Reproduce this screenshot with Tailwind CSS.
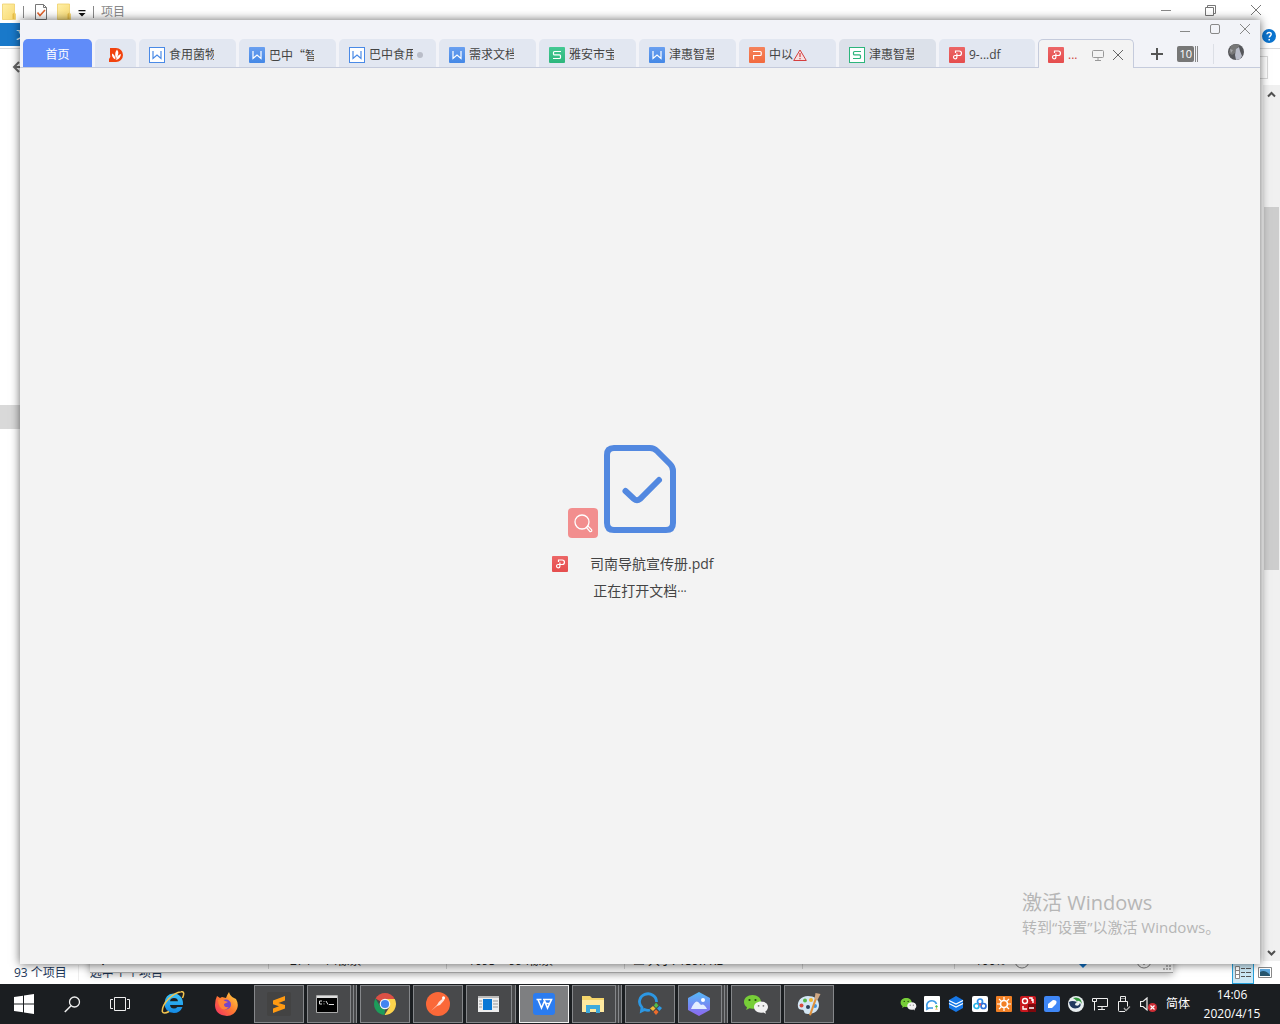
<!DOCTYPE html>
<html lang="zh-CN">
<head>
<meta charset="utf-8">
<title>司南导航宣传册.pdf - WPS</title>
<script src="https://cdn.jsdelivr.net/npm/@tailwindcss/browser@4"></script>
</head>
<body class="flex h-screen flex-col overflow-hidden bg-white font-['Open_Sans','Noto_Sans_CJK_SC',sans-serif] text-xs leading-4 text-[#444]">

<svg class="absolute size-0" aria-hidden="true">
  <defs>
    <linearGradient id="gBlue" x1="0" y1="0" x2="0" y2="1"><stop offset="0" stop-color="#6aa0f0"/><stop offset="1" stop-color="#4488e6"/></linearGradient>
    <linearGradient id="gGreen" x1="0" y1="0" x2="0" y2="1"><stop offset="0" stop-color="#45c993"/><stop offset="1" stop-color="#2cb67c"/></linearGradient>
    <linearGradient id="gOrange" x1="0" y1="0" x2="0" y2="1"><stop offset="0" stop-color="#f5835c"/><stop offset="1" stop-color="#f26a3e"/></linearGradient>
    <linearGradient id="gRed" x1="0" y1="0" x2="0" y2="1"><stop offset="0" stop-color="#ec6666"/><stop offset="1" stop-color="#e54d4d"/></linearGradient>
    <linearGradient id="gFold" x1="0" y1="0" x2="1" y2="1"><stop offset="0" stop-color="#fff0a8"/><stop offset="1" stop-color="#f8d870"/></linearGradient>
    <linearGradient id="gIe" x1="0" y1="0" x2="0" y2="1"><stop offset="0" stop-color="#3cc4f8"/><stop offset="1" stop-color="#1489e4"/></linearGradient>
  </defs>
  <symbol id="w-fill" viewBox="0 0 16 16"><rect width="16" height="16" rx="1" fill="url(#gBlue)"/><path d="M4 4v7.500L8 8l4 3.500V4" fill="none" stroke="#fff" stroke-width="1.200"/></symbol>
  <symbol id="w-line" viewBox="0 0 16 16"><rect x=".5" y=".5" width="15" height="15" fill="#fff" stroke="#4a8ae6"/><path d="M4 4v7.500L8 8l4 3.500V4" fill="none" stroke="#4a8ae6" stroke-width="1.200"/></symbol>
  <symbol id="s-fill" viewBox="0 0 16 16"><rect width="16" height="16" rx="1" fill="url(#gGreen)"/><path d="M12 4.500H5.500a1 1 0 0 0-1 1v1.400a1 1 0 0 0 1 1h5a1 1 0 0 1 1 1v1.600a1 1 0 0 1-1 1H4" fill="none" stroke="#fff" stroke-width="1.200"/></symbol>
  <symbol id="s-line" viewBox="0 0 16 16"><rect x=".5" y=".5" width="15" height="15" fill="#fff" stroke="#2db57c"/><path d="M12 4.500H5.500a1 1 0 0 0-1 1v1.400a1 1 0 0 0 1 1h5a1 1 0 0 1 1 1v1.600a1 1 0 0 1-1 1H4" fill="none" stroke="#2db57c" stroke-width="1.200"/></symbol>
  <symbol id="p-fill" viewBox="0 0 16 16"><rect width="16" height="16" rx="1" fill="url(#gOrange)"/><path d="M4 4.500h7.200q1 0 1 1v2q0 1-1 1H4.600V12.500" fill="none" stroke="#fff" stroke-width="1.200"/></symbol>
  <symbol id="pdf" viewBox="0 0 16 16"><rect width="16" height="16" rx="1" fill="url(#gRed)"/><path d="M6.500 6V4h3.700a2.200 2.200 0 0 1 0 4.500H6a1.700 1.700 0 1 0 1.900 1.700V6.500" fill="none" stroke="#fff" stroke-width="1.200"/></symbol>
  <symbol id="folder" viewBox="0 0 14 17"><path d="M.5 1h12v9l1 1v5.500H.5z" fill="url(#gFold)" stroke="#efcf6a" stroke-width=".8"/><path d="M10.500 16V11l2-1.500V16z" fill="#e7bd47"/></symbol>
  <symbol id="wechat" viewBox="0 0 26 20"><path d="M9.500 1C4.500 1 1 4 1 8c0 2.200 1.100 4 3 5.300L3.200 16l3.300-1.700c1 .3 2 .4 3 .4 5 0 8.500-3 8.500-6.800S14.500 1 9.500 1z" fill="#77ce38"/><circle cx="6.500" cy="6" r="1.100" fill="#244b12"/><circle cx="12.500" cy="6" r="1.100" fill="#244b12"/><path d="M18 7.500c-4 0-7 2.400-7 5.600s3 5.700 7 5.700c.8 0 1.600-.1 2.300-.3l2.700 1.300-.7-2.200c1.600-1 2.700-2.600 2.700-4.500 0-3.200-3-5.600-7-5.600z" fill="#f2f2f2"/><circle cx="15.600" cy="11.800" r=".9" fill="#777"/><circle cx="20.400" cy="11.800" r=".9" fill="#777"/></symbol>
  <symbol id="close" viewBox="0 0 12 12"><path d="M1 1l10 10M11 1L1 11" fill="none" stroke="currentColor"/></symbol>
</svg>

<main class="relative min-h-0 flex-1 overflow-hidden bg-white">

  <!-- File explorer window -->
  <section class="absolute inset-0 flex flex-col bg-white" aria-label="项目">
    <header class="flex h-[23px] shrink-0 items-center justify-between pl-[2px]">
      <div class="flex items-center">
        <svg class="h-[17px] w-[14px]"><use href="#folder"/></svg>
        <i class="ml-[7px] h-3 w-px bg-[#888]"></i>
        <svg class="ml-[11px] h-4 w-3" viewBox="0 0 12 16"><path d="M.5.5h8l3 3v12H.5z" fill="#fff" stroke="#777"/><path d="M8.500.5v3h3" fill="none" stroke="#777"/><path d="M2.500 8.500l2.500 3 5-5.500" fill="none" stroke="#e0622c" stroke-width="1.600"/></svg>
        <svg class="ml-[10px] h-[17px] w-[14px]"><use href="#folder"/></svg>
        <svg class="ml-[7px] mt-1 h-[7px] w-2" viewBox="0 0 8 7"><path d="M.5 0h7v1.200h-7zM.5 3h7L4 6.500z" fill="#111"/></svg>
        <i class="ml-[7px] h-3 w-px bg-[#888]"></i>
        <h1 class="ml-[7px] text-xs text-[#888]">项目</h1>
      </div>
      <div class="flex self-start pr-[2px] text-[#777]">
        <button class="flex h-5 w-[45px] items-center justify-center" aria-label="最小化"><i class="h-px w-[10px] bg-[#888]"></i></button>
        <button class="flex h-5 w-[45px] items-center justify-center" aria-label="还原"><svg class="size-[11px]" viewBox="0 0 11 11"><path d="M.5 2.500h8v8h-8zM2.500 2.500v-2h8v8h-2" fill="none" stroke="#777"/></svg></button>
        <button class="flex h-5 w-[45px] items-center justify-center" aria-label="关闭"><svg class="size-3"><use href="#close"/></svg></button>
      </div>
    </header>
    <div class="flex h-[26px] shrink-0 items-start justify-between border-b border-[#d9dadc]">
      <button class="h-[23px] w-14 bg-[#1979ca] pl-4 text-left text-white">文件</button>
      <svg class="mr-1 mt-[6px] size-[14px]" viewBox="0 0 14 14" role="img" aria-label="帮助"><circle cx="7" cy="7" r="7" fill="#0b74cf"/><path d="M5 5.300C5 2.700 9.300 2.800 9.200 5.300 9.200 6.800 7.200 6.900 7.200 8.600M7.200 10v1.500" fill="none" stroke="#fff" stroke-width="1.500"/></svg>
    </div>
    <div class="flex h-9 shrink-0 items-center justify-between pl-3">
      <svg class="h-3 w-4" viewBox="0 0 16 12"><path d="M7 1L2 6l5 5M2 6h14" fill="none" stroke="#666" stroke-width="2"/></svg>
      <i class="mr-3 h-[23px] w-40 border border-[#d9d9d9]"></i>
    </div>
    <div class="flex min-h-0 flex-1 justify-between">
      <div class="w-40 pt-80"><div class="h-6 bg-[#d9d9d9]"></div></div>
      <div class="flex w-[17px] flex-col items-center bg-[#f0f0f0]" aria-hidden="true">
        <svg class="mt-[5px] h-2 w-full" viewBox="0 0 17 8"><path d="M5 6.500L8.500 3 12 6.500" fill="none" stroke="#505050" stroke-width="2"/></svg>
        <i class="mt-[109px] h-[363px] w-[15px] bg-[#cdcdcd]"></i>
        <svg class="mb-1 mt-auto h-2 w-full" viewBox="0 0 17 8"><path d="M5 2l3.500 3.500L12 2" fill="none" stroke="#505050" stroke-width="2"/></svg>
      </div>
    </div>
    <footer class="flex h-[23px] shrink-0 items-center justify-between pl-3.5 text-[#1e395b]">
      <div class="flex items-center"><span>93 个项目</span><i class="mx-[11px] h-4 w-px bg-[#eee]"></i><span>选中 1 个项目</span></div>
      <div class="flex h-full items-center gap-1 pr-2">
        <button class="flex h-full w-[22px] items-center justify-center border border-[#26a0da] bg-[#cbe8f6]" aria-label="详细信息"><svg class="h-[14px] w-4" viewBox="0 0 16 14"><path d="M.5.5h4v12h-4zM.5 4.500h4M.5 8.500h4" fill="#fff" stroke="#888"/><path d="M6 2.500h4m1 0h5M6 6.500h4m1 0h5M6 10.500h4m1 0h5" stroke="#555"/></svg></button>
        <button aria-label="大图标"><svg class="h-[11px] w-[14px]" viewBox="0 0 14 11"><path d="M.5.5h13v10H.5z" fill="#fff" stroke="#888"/><path d="M2 2h10v7H2z" fill="#5da7dc"/><path d="M2 5q5-3 10 3v1H2z" fill="#27566e"/></svg></button>
      </div>
    </footer>
  </section>

  <!-- Paint window, only its status bar reaches below the front window -->
  <section class="absolute bottom-[11px] left-[90px] right-[107px] flex h-7 items-center border-b border-[#a0a0a0] bg-[#ececec] pt-1 text-[#222] shadow-[0_1px_8px_rgba(0,0,0,0.4)]" aria-label="画图">
    <span class="w-[178px] pl-2">✥</span>
    <span class="w-[178px] border-l border-[#c8c8c8] pl-2">⇥ 274 × 14像素</span>
    <span class="w-[178px] border-l border-[#c8c8c8] pl-2">⇥ 1095 × 994像素</span>
    <span class="w-[178px] border-l border-[#c8c8c8] pl-2">▤ 大小: 159.7KB</span>
    <span class="h-4 w-[152px] border-l border-[#c8c8c8]"></span>
    <span class="flex flex-1 items-center border-l border-[#c8c8c8] pl-5">100%
      <svg class="ml-2 h-4 w-[140px]" viewBox="0 0 140 16"><circle cx="8" cy="8" r="7" fill="#f4f4f4" stroke="#777"/><circle cx="130" cy="8" r="7" fill="#f4f4f4" stroke="#777"/><path d="M64 2h10v8l-5 5-5-5z" fill="#0f6cbd"/><path d="M130 4v8M126 8h8" stroke="#555"/></svg>
    </span>
    <svg class="mb-0.5 mr-0.5 size-2 self-end" viewBox="0 0 8 8"><path d="M6 0h2v2H6zM3 3h2v2H3zM6 3h2v2H6zM0 6h2v2H0zM3 6h2v2H3zM6 6h2v2H6z" fill="#aaa"/></svg>
  </section>

  <!-- WPS Office window -->
  <section class="absolute inset-5 flex flex-col bg-[#f3f3f3] shadow-[0_0_9px_rgba(0,0,0,0.6)]" aria-label="WPS Office">
    <header class="shrink-0 bg-[#f2f3f8]">
      <div class="flex h-[19px] justify-end text-[#888]">
        <button class="flex w-[30px] items-center justify-center pt-1" aria-label="最小化"><i class="h-px w-[10px] bg-[#888]"></i></button>
        <button class="flex w-[30px] items-center justify-center pb-px" aria-label="最大化"><i class="size-[10px] rounded-[2px] border border-[#888]"></i></button>
        <button class="flex w-[30px] items-center justify-center pb-px" aria-label="关闭"><svg class="size-3"><use href="#close"/></svg></button>
      </div>
      <nav class="flex h-[29px] gap-[3px] border-b border-[#c5cbdc] pl-[3px]" aria-label="文档标签">
        <button class="w-[69px] shrink-0 rounded-t-[5px] bg-[#608cf9] pt-[3px] text-white">首页</button>
        <button class="flex w-[41px] shrink-0 items-center justify-center rounded-t-[5px] bg-[#e2e7f1]" aria-label="稻壳"><svg class="mt-[3px] size-[14px]" viewBox="0 0 14 14"><path d="M1 0h6a7 7 0 1 1 0 14H0v-3q2-2 1-5z" fill="#f1430f"/><path d="M8 1.500q3 4-1 9-2-5 1-9zM3 5.500q3 1 3.500 6-4-2-3.500-6zM12 6q-.500 5-5 6 1-5 5-6z" fill="#fff"/></svg></button>
        <button class="flex w-[97px] shrink-0 items-center gap-1 rounded-t-[5px] bg-[#e2e7f1] pl-[10px] pt-[3px]"><svg class="size-4 shrink-0"><use href="#w-line"/></svg><span class="w-[45px] overflow-hidden whitespace-nowrap text-left">食用菌物</span></button>
        <button class="flex w-[97px] shrink-0 items-center gap-1 rounded-t-[5px] bg-[#e2e7f1] pl-[10px] pt-[3px]"><svg class="size-4 shrink-0"><use href="#w-fill"/></svg><span class="w-[45px] overflow-hidden whitespace-nowrap text-left font-['Noto_Sans_CJK_SC',sans-serif]">巴中“智</span></button>
        <button class="flex w-[97px] shrink-0 items-center gap-1 rounded-t-[5px] bg-[#e2e7f1] pl-[10px] pt-[3px]"><svg class="size-4 shrink-0"><use href="#w-line"/></svg><span class="w-11 overflow-hidden whitespace-nowrap text-left">巴中食用</span><i class="size-1.5 rounded-full bg-[#b9bdc8]"></i></button>
        <button class="flex w-[97px] shrink-0 items-center gap-1 rounded-t-[5px] bg-[#e2e7f1] pl-[10px] pt-[3px]"><svg class="size-4 shrink-0"><use href="#w-fill"/></svg><span class="w-[45px] overflow-hidden whitespace-nowrap text-left">需求文档</span></button>
        <button class="flex w-[97px] shrink-0 items-center gap-1 rounded-t-[5px] bg-[#e2e7f1] pl-[10px] pt-[3px]"><svg class="size-4 shrink-0"><use href="#s-fill"/></svg><span class="w-[45px] overflow-hidden whitespace-nowrap text-left">雅安市宝</span></button>
        <button class="flex w-[97px] shrink-0 items-center gap-1 rounded-t-[5px] bg-[#e2e7f1] pl-[10px] pt-[3px]"><svg class="size-4 shrink-0"><use href="#w-fill"/></svg><span class="w-[45px] overflow-hidden whitespace-nowrap text-left">津惠智慧</span></button>
        <button class="flex w-[97px] shrink-0 items-center gap-1 rounded-t-[5px] bg-[#e2e7f1] pl-[10px] pt-[3px]"><svg class="size-4 shrink-0"><use href="#p-fill"/></svg><span class="flex items-center">中以<svg class="h-3 w-[14px]" viewBox="0 0 14 12"><path d="M7 1L13.300 11.500H.7z" fill="#f6dfe0" stroke="#d43e3e"/><path d="M7 4v4M7 9v1.200" stroke="#d43e3e" stroke-width="1.200"/></svg></span></button>
        <button class="flex w-[97px] shrink-0 items-center gap-1 rounded-t-[5px] bg-[#dce1ea] pl-[10px] pt-[3px]"><svg class="size-4 shrink-0"><use href="#s-line"/></svg><span class="w-[45px] overflow-hidden whitespace-nowrap text-left">津惠智慧</span></button>
        <button class="flex w-24 shrink-0 items-center gap-1 rounded-t-[5px] bg-[#e2e7f1] pl-[10px] pt-[3px]"><svg class="size-4 shrink-0"><use href="#pdf"/></svg><span>9-...df</span></button>
        <div class="-mb-px flex w-24 shrink-0 items-center rounded-t-[5px] border border-b-0 border-[#c5cbdc] bg-[#f3f3f3] pl-[9px] pt-[2px]">
          <svg class="size-4"><use href="#pdf"/></svg><span class="ml-1 w-6 text-[#d0453f]">...</span>
          <svg class="h-[11px] w-3" viewBox="0 0 12 11"><path d="M1.500.5h9q1 0 1 1v5q0 1-1 1h-9q-1 0-1-1v-5q0-1 1-1zM6 7.500v3M3 10.500h6" fill="none" stroke="#999"/></svg>
          <button class="ml-2 text-[#666]" aria-label="关闭标签"><svg class="size-3"><use href="#close"/></svg></button>
        </div>
        <div class="flex min-w-0 flex-1 items-center justify-between pl-[14px] pr-4 pt-0.5">
          <button aria-label="新建标签"><svg class="size-3" viewBox="0 0 12 12"><path d="M6 0v12M0 6h12" stroke="#555" stroke-width="2"/></svg></button>
          <button class="flex items-center gap-px" aria-label="标签列表 10"><span class="h-4 w-[17px] rounded-[2px] bg-[#777] text-[11px] leading-4 text-white">10</span><i class="h-4 w-px bg-[#888]"></i><i class="h-4 w-px bg-[#888]"></i></button>
          <i class="h-5 w-px bg-[#dcdfe6]"></i>
          <button class="-mt-1" aria-label="账号"><svg class="size-4" viewBox="0 0 16 16"><circle cx="8" cy="8" r="8" fill="#55565a"/><path d="M3 1.800Q8-1 12 1.500L9 4 7 9 4 11 1 9q1-5 2-7z" fill="#777"/><path d="M8 5l3-2 1 4 2 5-2 3-4 1-1-5z" fill="#b9bcc9"/><path d="M2 5l3 1-2 3z" fill="#a5a5a8"/></svg></button>
        </div>
      </nav>
    </header>

    <div class="flex min-h-0 flex-1 flex-col items-center justify-center pt-[14px]">
      <div class="relative">
        <svg class="h-[88px] w-[72px]" viewBox="0 0 72 88"><path d="M10 3h36q4 0 7 3l13 13q3 3 3 7v52q0 7-7 7H10q-7 0-7-7V10q0-7 7-7z" fill="none" stroke="#5288e0" stroke-width="6"/><path d="M21.500 46l8.500 8q3 2.500 6 0L55 35" fill="none" stroke="#5288e0" stroke-width="6" stroke-linecap="round"/></svg>
        <svg class="absolute -left-9 top-[63px] size-[30px]" viewBox="0 0 30 30"><rect width="30" height="30" rx="4" fill="#f28e8e"/><circle cx="14" cy="14" r="7" fill="none" stroke="#fff" stroke-width="1.300"/><path d="M18.500 19.500l1.500-1.500 3.500 3.500q.8 1.500-.5 2t-1.500-.5z" fill="none" stroke="#fff" stroke-width="1.200"/></svg>
      </div>
      <div class="mt-5 flex w-[176px] items-center gap-[22px] whitespace-nowrap text-sm leading-[22px]">
        <svg class="size-4 shrink-0"><use href="#pdf"/></svg><span>司南导航宣传册.pdf</span>
      </div>
      <p class="mt-[5px] text-sm leading-[22px]" role="status">正在打开文档<span class="text-xs">···</span></p>
    </div>
  </section>

  <aside class="absolute bottom-[46px] right-[54px] w-[204px] whitespace-nowrap text-[#b6b6b6]">
    <p class="text-xl leading-[26px]">激活 Windows</p>
    <p class="text-[15px] leading-[22px]">转到“设置”以激活 Windows。</p>
  </aside>
</main>

<!-- Taskbar -->
<footer class="flex h-10 shrink-0 items-stretch justify-between bg-[#1b1e21] text-white">
  <div class="flex">
    <div class="flex pr-1">
      <button class="flex w-12 items-center justify-center" aria-label="开始"><svg class="size-5" viewBox="0 0 20 20"><path d="M0 3l9-1.300V9.500H0zM10 1.500L20 0v9.500H10zM0 10.500h9v7.800L0 17zM10 10.500h10V20l-10-1.500z" fill="#fff"/></svg></button>
      <button class="flex w-12 items-center justify-center" aria-label="搜索"><svg class="size-[17px]" viewBox="0 0 17 17"><circle cx="10.500" cy="6" r="5" fill="none" stroke="#eee" stroke-width="1.300"/><path d="M7 9.800L.8 16" stroke="#eee" stroke-width="1.500"/></svg></button>
      <button class="flex w-12 items-center justify-center" aria-label="任务视图"><svg class="h-[14px] w-5" viewBox="0 0 20 14"><path d="M4.500.5h11v13h-11zM3 2.500H.5v9H3M17 2.500h2.500v9H17" fill="none" stroke="#eee"/></svg></button>
    </div>
    <div class="flex gap-[3px] pb-px pt-px">
      <button class="flex w-[50px] items-center justify-center" aria-label="Internet Explorer"><svg class="mb-0.5 size-6" viewBox="0 0 24 24"><path fill-rule="evenodd" d="M12.500 2.500C18.500 2.500 22 7 22 12v2H9q.5 3.500 4 3.500 2.300 0 3.300-1.500H21.500Q19 22 13 22 3.500 21.500 3.500 12.200 4 3 12.500 2.500zM9 10.300h8Q16.500 7 13 7T9 10.300z" fill="url(#gIe)"/><path d="M21.500 7Q24.500 0 20 .8 14 1.500 7.500 8T1.300 20.500Q2.500 23.500 8 20.500" fill="none" stroke="#f2c44f" stroke-width="1.500"/></svg></button>
      <button class="flex w-[50px] items-center justify-center" aria-label="Firefox"><svg class="size-6" viewBox="0 0 24 24"><defs><linearGradient id="gFox" x1="1" y1="0" x2="0" y2="1"><stop offset="0" stop-color="#ffdf42"/><stop offset=".5" stop-color="#ff7a30"/><stop offset="1" stop-color="#f32969"/></linearGradient></defs><path d="M3 4l3 2 2-1 4 1q1-3 3-6 1 4 5 6l2 1q3 5 1 10-3 7-10 7Q1 23 1 13q0-5 2-9z" fill="url(#gFox)"/><circle cx="12" cy="12.500" r="5" fill="#7546c9"/><path d="M4 8q4-2 7 1l3 1-4 2q0 4 5 3-5 5-9 0-2-3-2-7z" fill="#ff8438"/></svg></button>
      <button class="flex w-[50px] items-center justify-center border border-[#85878a] bg-[#48494b]" aria-label="Sublime Text"><svg class="size-6" viewBox="0 0 24 24"><rect width="24" height="24" rx="2" fill="#434343"/><path d="M18 4v4.500L11.500 11l6.500 2v3.500L6 21v-4.500l6-2.200-6-2V8.500z" fill="#ff9a12"/></svg></button>
      <button class="flex w-[50px]" aria-label="命令提示符"><span class="flex h-full w-11 items-center justify-center border border-[#85878a] bg-[#48494b] pr-1"><svg class="h-[18px] w-[22px]" viewBox="0 0 22 18"><path d="M.5.5h21v17H.5z" fill="#000" stroke="#aaa"/><path d="M1 1h20v2H1z" fill="#ddd"/><path d="M6 6H3.500v3H6M8 6v.8M8 8.500v.8M10 6l2 3.500M13 9.500h5" fill="none" stroke="#ddd"/></svg></span><i class="h-full w-[3px] border-r border-[#85878a] bg-[#48494b]"></i><i class="h-full w-[3px] border-r border-[#85878a] bg-[#48494b]"></i></button>
      <button class="flex w-[50px] items-center justify-center border border-[#85878a] bg-[#48494b]" aria-label="Chrome"><svg class="size-[22px]" viewBox="0 0 22 22"><path d="M11 11L1.500 5.500a11 11 0 0 1 19 0z" fill="#dc5045"/><path d="M11 6h9.800A11 11 0 0 1 10.500 22l5-8z" fill="#fcd34c"/><path d="M1.500 5.500l5 8.500 4.500 2-.5 6A11 11 0 0 1 1.500 5.500z" fill="#1d9c5a"/><circle cx="11" cy="11" r="5.300" fill="#f4f4f4"/><circle cx="11" cy="11" r="4.100" fill="#4384f0"/></svg></button>
      <button class="flex w-[50px] items-center justify-center border border-[#85878a] bg-[#48494b]" aria-label="Postman"><svg class="size-6" viewBox="0 0 24 24"><circle cx="12" cy="12" r="12" fill="#fb6838"/><path d="M5 19l6-6q1-3 4-5l3-2.500q1.500 1 0 3L14 13l-3 1z" fill="#fff" fill-opacity=".8"/><circle cx="17.500" cy="5.800" r="1.500" fill="#fff"/></svg></button>
      <button class="flex w-[50px]" aria-label="应用程序"><span class="flex h-full w-[46px] items-center justify-center border border-[#85878a] bg-[#48494b] pr-0.5"><svg class="h-4 w-[21px]" viewBox="0 0 21 16"><path d="M0 0h21v16H0z" fill="#eee"/><path d="M0 0h21v2H0z" fill="#bbb"/><path d="M5 3h9v11H5z" fill="#0877d5"/><path d="M1 5h3M1 8h3M1 11h3M15 5h5M15 8h5M15 11h5" stroke="#999"/></svg></span><i class="h-full w-1 border-r border-[#85878a] bg-[#48494b]"></i></button>
      <button class="flex w-[50px] items-center justify-center border border-[#f0f0f0] bg-[#7e7f81]" aria-label="WPS Office" aria-current="true"><svg class="size-[22px]" viewBox="0 0 22 22"><rect width="22" height="22" rx="3" fill="#2b7cf0"/><path d="M3.500 6.500h5M10 6.500h8.500L14.500 15l-3-7-3 7L5 6.500M11.500 8l1.500 2.500h4" fill="none" stroke="#fff" stroke-width="1.600"/></svg></button>
      <button class="flex w-[50px]" aria-label="文件资源管理器"><span class="flex h-full w-11 items-center justify-center border border-[#85878a] bg-[#48494b] pr-0.5"><svg class="h-[19px] w-[22px]" viewBox="0 0 22 19"><path d="M0 1h8l2 2h12v14H0z" fill="#f5d56b"/><path d="M0 5h22v12H0z" fill="#ffe9a0"/><path d="M4 18v-8h14v8h-4v-4H8v4z" fill="#3eaadc"/></svg></span><i class="h-full w-[3px] border-r border-[#85878a] bg-[#48494b]"></i><i class="h-full w-[3px] border-r border-[#85878a] bg-[#48494b]"></i></button>
      <button class="flex w-[50px] items-center justify-center border border-[#85878a] bg-[#48494b]" aria-label="企业微信"><svg class="size-6" viewBox="0 0 24 24"><path d="M12 18q-2.500.8-5.500-.5L3.500 19l.5-3.500A8.500 8 0 1 1 18.500 10" fill="none" stroke="#2c97e3" stroke-width="2.800"/><path d="M18 10.500l2.500 3-2.500 2.500-2-2.500z" fill="#52bd4a"/><path d="M24 16l-2.500 3-2.500-2.500 2.500-2.500z" fill="#2c9be6"/><path d="M18 23l-2.500-3 2.500-2.500 2.500 2.500z" fill="#ee6c2c"/><path d="M12 16.500l3-2.500 2.500 2.500-2.500 2.500z" fill="#f4bc34"/></svg></button>
      <button class="flex w-[50px]" aria-label="图片查看"><span class="flex h-full w-11 items-center justify-center border border-[#85878a] bg-[#48494b] pr-0.5"><svg class="h-6 w-[22px]" viewBox="0 0 22 24"><defs><linearGradient id="gHex" x1="0" y1="0" x2="0" y2="1"><stop offset="0" stop-color="#55b9f7"/><stop offset="1" stop-color="#8d66ef"/></linearGradient></defs><path d="M11 0l11 6v12l-11 6-11-6V6z" fill="url(#gHex)"/><path d="M3 17q5-12 9-5l1 1q3-2 6 4z" fill="#e2edff"/><circle cx="15" cy="8" r="2" fill="#fff"/></svg></span><i class="h-full w-[3px] border-r border-[#85878a] bg-[#48494b]"></i><i class="h-full w-[3px] border-r border-[#85878a] bg-[#48494b]"></i></button>
      <button class="flex w-[50px] items-center justify-center border border-[#85878a] bg-[#48494b]" aria-label="微信"><svg class="h-5 w-[26px]"><use href="#wechat"/></svg></button>
      <button class="flex w-[50px] items-center justify-center border border-[#85878a] bg-[#48494b]" aria-label="画图"><svg class="size-6" viewBox="0 0 24 24"><path d="M11 4C4 4 0 9 1 15c1 4 4 2 5 3 2 1 0 4 5 4 7 0 11-4 11-9 0-6-5-9-11-9z" fill="#d3e6f4"/><circle cx="4.500" cy="13.500" r="2" fill="#d94c3c"/><circle cx="8" cy="8.500" r="2" fill="#55b847"/><circle cx="14" cy="8" r="2" fill="#f2b52c"/><circle cx="11" cy="15" r="2" fill="#30445c"/><circle cx="18" cy="14" r="2" fill="#4292dc"/><path d="M12 23l6-17 2 .5-6 17z" fill="#e0913c"/><path d="M17.500 7l1-6 5 1-3 6z" fill="#cfa782"/></svg></button>
    </div>
  </div>

  <div class="flex items-stretch pr-3">
    <button class="flex w-6 items-center justify-center" aria-label="微信"><svg class="h-[14px] w-[17px]"><use href="#wechat"/></svg></button>
    <button class="flex w-6 items-center justify-center" aria-label="企业微信"><svg class="size-4" viewBox="0 0 16 16"><rect width="16" height="16" rx="1" fill="#fff"/><path d="M9 12H5l-2 1v-2a5 4.700 0 1 1 9.500-3" fill="none" stroke="#3a9ae6" stroke-width="1.700"/><path d="M12.500 9l1.500 1.500-1.500 1.500L11 10.500z" fill="#54bd4c"/><path d="M12.500 12l1.500 1.500-3 0z" fill="#f2a32e"/></svg></button>
    <button class="flex w-6 items-center justify-center" aria-label="云盘"><svg class="size-4" viewBox="0 0 16 16"><path d="M8 0l7 4v8l-7 4-7-4V4z" fill="#1778e8"/><path d="M1 7.500l7 3.500 7-3.500M1 4.500L8 8l7-3.500" fill="none" stroke="#fff" stroke-width="1.200"/></svg></button>
    <button class="flex w-6 items-center justify-center" aria-label="百度网盘"><svg class="size-4" viewBox="0 0 16 16"><rect width="16" height="16" rx="2" fill="#fff"/><g fill="none" stroke-width="1.700"><circle cx="8" cy="5.500" r="2.500" stroke="#2d8cea"/><circle cx="4.500" cy="10" r="2.500" stroke="#27b4e8"/><circle cx="11.500" cy="10" r="2.500" stroke="#2d72dd"/></g><circle cx="8" cy="8.500" r="1.200" fill="#e55668"/></svg></button>
    <button class="flex w-6 items-center justify-center" aria-label="向日葵"><svg class="size-4" viewBox="0 0 16 16"><rect width="16" height="16" rx="1" fill="#f28025"/><circle cx="8" cy="8" r="3.500" fill="none" stroke="#fff" stroke-width="1.700"/><path d="M8 1v3M8 12v3M1 8h3M12 8h3M3 3l2.500 2.500M13 3l-2.500 2.500M3 13l2.500-2.500M13 13l-2.500-2.500" stroke="#fff" stroke-width="1.200"/></svg></button>
    <button class="flex w-6 items-center justify-center" aria-label="录制"><svg class="size-4" viewBox="0 0 16 16"><rect width="16" height="16" rx="2" fill="#c9171e"/><circle cx="5" cy="5" r="2.500" fill="none" stroke="#fff" stroke-width="1.400"/><path d="M9 2h3v3M3 10v3h4M13 3v4" fill="none" stroke="#fff" stroke-width="1.400"/><path d="M8 8h8v8H8z" fill="#7e080d"/><path d="M9 12h5" stroke="#fff" stroke-width="1.500"/></svg></button>
    <button class="flex w-6 items-center justify-center" aria-label="笔记"><svg class="size-4" viewBox="0 0 16 16"><rect width="16" height="16" rx="2" fill="#3f87f6"/><path d="M4 12V8l5-4q5 0 3 4l-4 4z" fill="#fff"/></svg></button>
    <button class="flex w-6 items-center justify-center" aria-label="浏览助手"><svg class="size-4" viewBox="0 0 16 16"><circle cx="8" cy="8" r="8" fill="#e9eef0"/><path d="M5 2q8-2 9 6-2-4-5-3l1 3q-1-4-5-6z" fill="#35963d"/><path d="M1 6q1 8 9 6 4-2 2-5-1 4-5 2 0-2 2-3-5-2-8 0z" fill="#20385d"/></svg></button>
    <button class="flex w-6 items-center justify-center" aria-label="网络"><svg class="h-[14px] w-4" viewBox="0 0 16 14"><path d="M4.500 1.500h11v8h-10M.5 1.500h4v3h-4zM2.500 4.500v9M10 9.500v3M6 12.500h7" fill="none" stroke="#eee"/></svg></button>
    <button class="flex w-6 items-center justify-center" aria-label="USB"><svg class="h-4 w-[14px]" viewBox="0 0 14 16"><path d="M3.500 5V.5h5V5M8 15.500H2.500q-1 0-1-1V5.500h9v5" fill="none" stroke="#eee"/><path d="M5 2v1M7 2v1" stroke="#eee"/><path d="M7 12l2 2.500 4-4" fill="none" stroke="#aaa" stroke-width="1.300"/></svg></button>
    <button class="flex w-6 items-center justify-center" aria-label="静音"><svg class="h-[15px] w-[17px]" viewBox="0 0 17 15"><path d="M.5 4.500h2.500L7 1v12L3 9.500H.5z" fill="none" stroke="#eee" stroke-width="1.200"/><circle cx="12.500" cy="10.500" r="4.500" fill="#cf2d35"/><path d="M10.500 8.500l4 4M14.500 8.500l-4 4" stroke="#fff" stroke-width="1.200"/></svg></button>
    <button class="w-9">简体</button>
    <button class="w-[72px] leading-[19px]"><time datetime="2020-04-15T14:06">14:06<br>2020/4/15</time></button>
  </div>
</footer>
</body>
</html>
